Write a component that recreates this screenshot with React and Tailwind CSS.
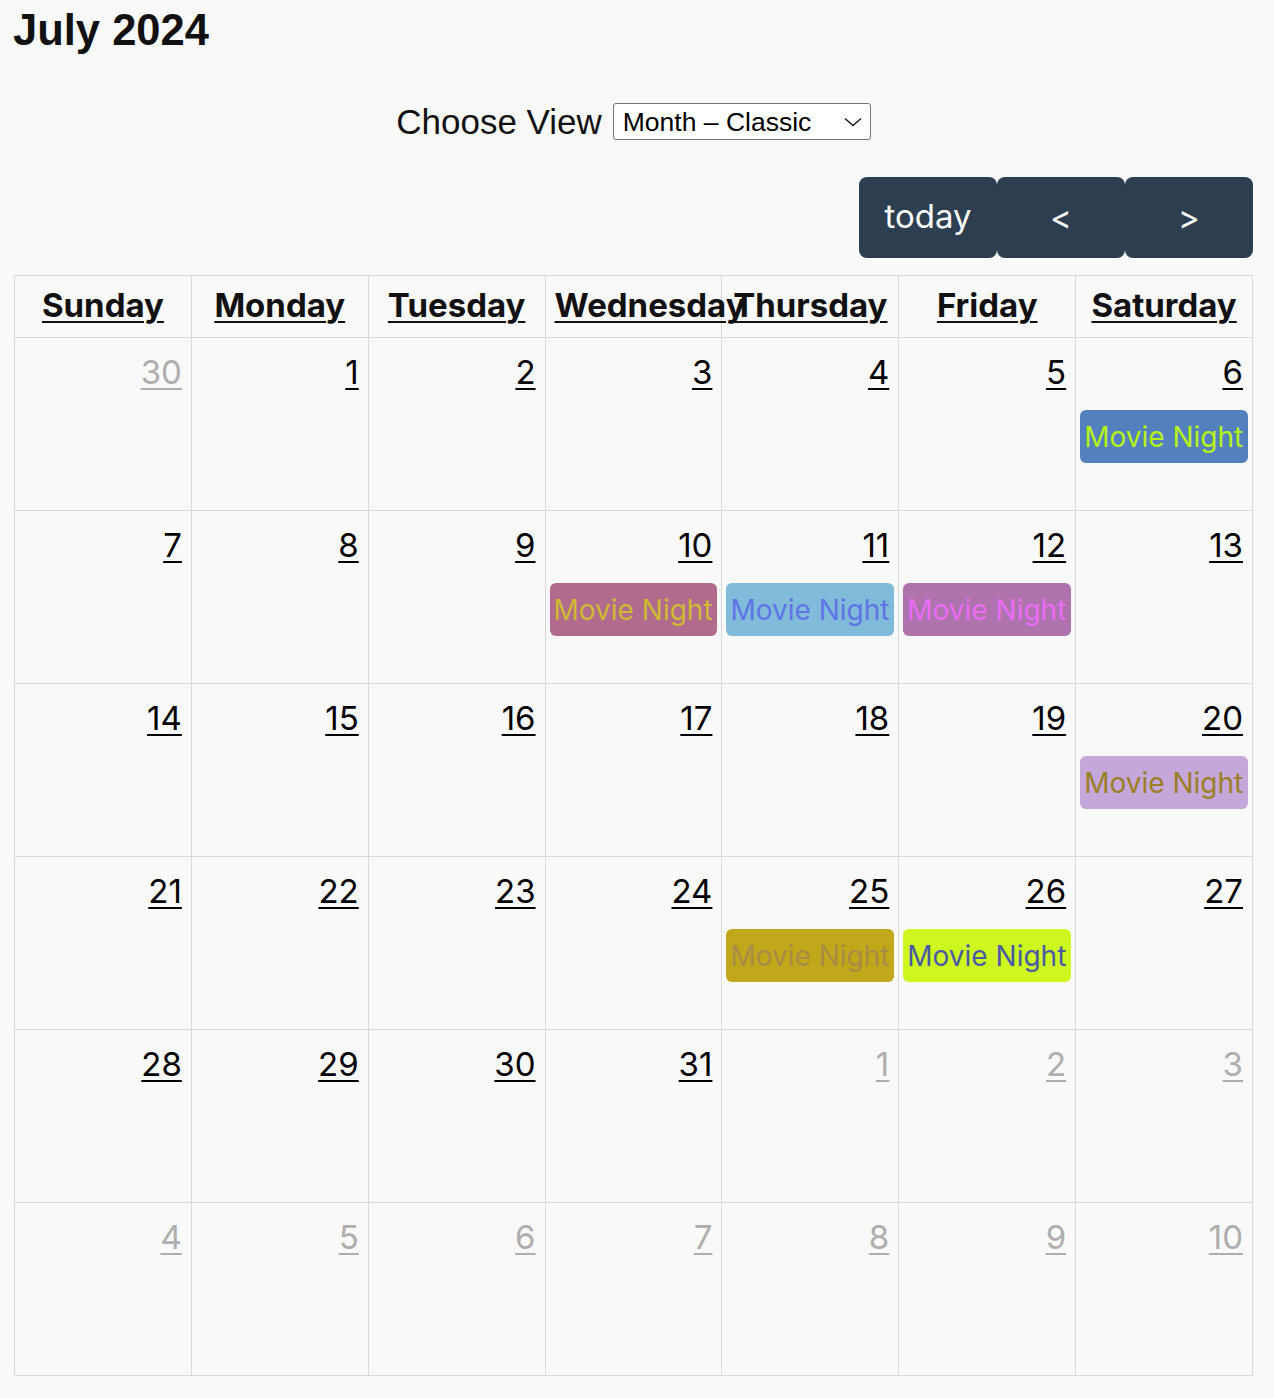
import React from "react";

const weeks = [
  [[30, true], [1], [2], [3], [4], [5], [6]],
  [[7], [8], [9], [10], [11], [12], [13]],
  [[14], [15], [16], [17], [18], [19], [20]],
  [[21], [22], [23], [24], [25], [26], [27]],
  [[28], [29], [30], [31], [1, true], [2, true], [3, true]],
  [[4, true], [5, true], [6, true], [7, true], [8, true], [9, true], [10, true]],
];

const events = {
  6: "bg-[#5480be] text-[#b6f21a]",
  10: "bg-[#b06b8d] text-[#cfb935]",
  11: "bg-[#80bbda] text-[#5f74e6]",
  12: "bg-[#ae72ad] text-[#ea6cf5]",
  20: "bg-[#c5a8d9] text-[#9b7e25]",
  25: "bg-[#c0a81a] text-[#a88c45]",
  26: "bg-[#cef61f] text-[#4a5aa6]",
};

const days = ["Sunday", "Monday", "Tuesday", "Wednesday", "Thursday", "Friday", "Saturday"];

export default function App() {
  return (
    <div className="min-h-[1398px] bg-[#f9f9f9] text-[#111]">
      <h1 className="pl-[13px] pt-[6px] font-['Liberation_Sans',Arial,sans-serif] text-[43.5px] font-bold leading-[49px]">
        July 2024
      </h1>

      <div className="ml-[14px] w-[1239px]">
        <div className="mt-[48px] flex h-[37px] items-center justify-center gap-[11px] font-['Liberation_Sans',Arial,sans-serif]">
          <span className="text-[35px] leading-[39px]">Choose View</span>
          <div className="flex h-[37px] w-[258px] items-center justify-between rounded-[3px] border border-[#767676] bg-white pl-[9px] pr-[8px] text-[26.5px] leading-[30px] text-black">
            <span>Month – Classic</span>
            <svg width="18" height="10" viewBox="0 0 18 10" fill="none">
              <path d="M1 1.5 L9 8.5 L17 1.5" stroke="#222" strokeWidth="1.6" />
            </svg>
          </div>
        </div>

        <div className="mt-[37px] flex justify-end font-['Inter',sans-serif] text-[33px] text-white">
          <div className="flex h-[81px] w-[138px] items-center justify-center rounded-[8px] bg-[#2c3e50] pb-[2px]">today</div>
          <div className="flex h-[81px] w-[128px] items-center justify-center rounded-[8px] bg-[#2c3e50]">&lt;</div>
          <div className="flex h-[81px] w-[128px] items-center justify-center rounded-[8px] bg-[#2c3e50]">&gt;</div>
        </div>

        <div className="mt-[17px] grid w-[1239px] grid-cols-7 border-l border-t border-[#d9d9d9] font-['Inter',sans-serif] text-[33px]">
          {days.map((d) => (
            <div key={d} className="h-[62px] border-b border-r border-[#d9d9d9] px-[9px] pt-[9px]">
              <div className="whitespace-nowrap text-center font-bold leading-[40px] text-[#111] underline decoration-2 underline-offset-[4px]">
                {d}
              </div>
            </div>
          ))}
          {weeks.map((week, wi) =>
            week.map(([n, other], di) => {
              const ev = !other ? events[n] : null;
              return (
                <div key={wi + "-" + di} className="flex h-[173px] flex-col border-b border-r border-[#d9d9d9] pt-[14px]">
                  <div
                    className={
                      "pr-[9px] text-right leading-[40px] underline decoration-2 underline-offset-[4px] " +
                      (other ? "text-[#aeaeae]" : "text-black")
                    }
                  >
                    {n}
                  </div>
                  {ev && (
                    <div
                      className={
                        "mx-[4px] mt-[18px] flex h-[53px] items-center overflow-hidden whitespace-nowrap rounded-[6px] pl-[4px] text-[28px] " +
                        ev
                      }
                    >
                      Movie Night
                    </div>
                  )}
                </div>
              );
            })
          )}
        </div>
      </div>
    </div>
  );
}
